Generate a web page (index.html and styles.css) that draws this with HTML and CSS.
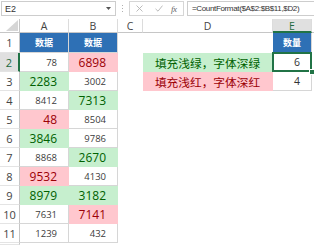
FILE: index.html
```html
<!DOCTYPE html>
<html lang="zh">
<head>
<meta charset="utf-8">
<title>CountFormat</title>
<link rel="stylesheet" href="styles.css">
</head>
<body>
<div class="app">
  <div class="fbar">
    <div class="namebox">
      <span>E2</span>
      <svg class="dd" width="5" height="3" viewBox="0 0 5 3"><polygon points="0,0 5,0 2.5,3" fill="#555"/></svg>
    </div>
    <div class="sep">
      <svg width="2" height="8" viewBox="0 0 2 8"><rect x="0" y="0" width="1" height="1" fill="#b0b0b0"/><rect x="0" y="3" width="1" height="1" fill="#b0b0b0"/><rect x="0" y="6" width="1" height="1" fill="#b0b0b0"/></svg>
    </div>
    <div class="btns">
      <svg class="ic-x" width="7" height="7" viewBox="0 0 7 7"><path d="M0.5 0.5 L6.5 6.5 M6.5 0.5 L0.5 6.5" stroke="#b4b4b4" stroke-width="0.9" fill="none"/></svg>
      <svg class="ic-ok" width="8" height="7" viewBox="0 0 8 7"><path d="M0.5 3.8 L3 6.2 L7.5 0.6" stroke="#b4b4b4" stroke-width="0.9" fill="none"/></svg>
      <span class="fx">fx</span>
    </div>
    <div class="formula">=CountFormat($A$2:$B$11,$D2)</div>
  </div>

  <div class="sheet">
    <!-- column headers -->
    <div class="corner"><svg width="12" height="11" viewBox="0 0 12 11"><polygon points="0,11 12,11 12,0" fill="#d6d6d6"/></svg></div>
    <div class="ch">A</div>
    <div class="ch">B</div>
    <div class="ch">C</div>
    <div class="ch">D</div>
    <div class="ch sel">E</div>
    <div class="ch last"></div>

    <!-- row 1 -->
    <div class="rh">1</div>
    <div class="hd">数据</div>
    <div class="hd">数据</div>
    <div class="e"></div>
    <div class="e"></div>
    <div class="hd">数量</div>
    <div class="e"></div>

    <!-- row 2 -->
    <div class="rh sel">2</div>
    <div class="b n">78</div>
    <div class="b big red">6898</div>
    <div class="e"></div>
    <div class="b note green">填充浅绿，字体深绿</div>
    <div class="b n v active">6</div>
    <div class="e"></div>

    <!-- row 3 -->
    <div class="rh">3</div>
    <div class="b big green">2283</div>
    <div class="b n">3002</div>
    <div class="e"></div>
    <div class="b note red">填充浅红，字体深红</div>
    <div class="b n v">4</div>
    <div class="e"></div>

    <!-- row 4 -->
    <div class="rh">4</div>
    <div class="b n">8412</div>
    <div class="b big green">7313</div>
    <div class="e"></div><div class="e"></div><div class="e"></div><div class="e"></div>

    <!-- row 5 -->
    <div class="rh">5</div>
    <div class="b big red">48</div>
    <div class="b n">8504</div>
    <div class="e"></div><div class="e"></div><div class="e"></div><div class="e"></div>

    <!-- row 6 -->
    <div class="rh">6</div>
    <div class="b big green">3846</div>
    <div class="b n">9786</div>
    <div class="e"></div><div class="e"></div><div class="e"></div><div class="e"></div>

    <!-- row 7 -->
    <div class="rh">7</div>
    <div class="b n">8868</div>
    <div class="b big green">2670</div>
    <div class="e"></div><div class="e"></div><div class="e"></div><div class="e"></div>

    <!-- row 8 -->
    <div class="rh">8</div>
    <div class="b big red">9532</div>
    <div class="b n">4130</div>
    <div class="e"></div><div class="e"></div><div class="e"></div><div class="e"></div>

    <!-- row 9 -->
    <div class="rh">9</div>
    <div class="b big green">8979</div>
    <div class="b big green">3182</div>
    <div class="e"></div><div class="e"></div><div class="e"></div><div class="e"></div>

    <!-- row 10 -->
    <div class="rh">10</div>
    <div class="b n">7631</div>
    <div class="b big red">7141</div>
    <div class="e"></div><div class="e"></div><div class="e"></div><div class="e"></div>

    <!-- row 11 -->
    <div class="rh">11</div>
    <div class="b n">1239</div>
    <div class="b n">432</div>
    <div class="e"></div><div class="e"></div><div class="e"></div><div class="e"></div>

    <!-- row 12 (cut off) -->
    <div class="rh"></div>
    <div class="e"></div><div class="e"></div><div class="e"></div><div class="e"></div><div class="e"></div><div class="e"></div>
  </div>
</div>
</body>
</html>
```

FILE: styles.css
```css
html, body {
  margin: 0;
  padding: 0;
  background: #ffffff;
}
body {
  width: 314px;
  height: 245px;
  overflow: hidden;
  font-family: "Open Sans", "Liberation Sans", "Noto Sans CJK SC", sans-serif;
  color: #333;
}
.app {
  display: flex;
  flex-direction: column;
  width: 314px;
  height: 245px;
}

/* ---------- formula bar ---------- */
.fbar {
  display: flex;
  align-items: flex-start;
  height: 19px;
  padding-top: 1px;
  box-sizing: border-box;
}
.namebox {
  box-sizing: border-box;
  margin-left: 1px;
  width: 115px;
  height: 15px;
  border: 1px solid #cdcdcd;
  display: flex;
  align-items: center;
  justify-content: space-between;
  padding: 0 4px 0 3px;
  font-family: "Liberation Sans", sans-serif;
  font-size: 9px;
  color: #333;
}
.dd { display: block; }
.sep {
  width: 13px;
  height: 15px;
  display: flex;
  align-items: center;
  justify-content: center;
}
.sep svg { display: block; }
.btns {
  box-sizing: border-box;
  width: 55px;
  height: 15px;
  border: 1px solid #d6d6d6;
  display: flex;
  align-items: center;
  padding-left: 6px;
}
.ic-x { display: block; }
.ic-ok { display: block; margin-left: 12px; }
.fx {
  margin-left: 8px;
  font-family: "Liberation Serif", serif;
  font-style: italic;
  font-size: 9px;
  color: #666;
  letter-spacing: -0.5px;
}
.formula {
  box-sizing: border-box;
  margin-left: 3px;
  flex: 1;
  height: 15px;
  border: 1px solid #cdcdcd;
  border-right: none;
  padding-left: 4px;
  display: flex;
  align-items: center;
  font-family: "Liberation Sans", sans-serif;
  font-size: 8px;
  letter-spacing: -0.35px;
  color: #333;
  white-space: nowrap;
}

/* ---------- sheet grid ---------- */
.sheet {
  display: grid;
  grid-template-columns: 20px 49px 49px 25px 130px 39px 1fr;
  grid-template-rows: 14px 20px repeat(10, 19px) 1fr;
  flex: 1;
  min-height: 0;
}
.sheet > div {
  box-sizing: border-box;
  min-width: 0;
  display: flex;
  align-items: center;
  white-space: nowrap;
}

/* column headers */
.corner {
  border-right: 1px solid #c6c6c6;
  border-bottom: 1px solid #c6c6c6;
  justify-content: flex-end;
  align-items: flex-end !important;
  padding: 0 1px 1px 0;
}
.corner svg { display: block; }
.ch {
  justify-content: center;
  border-right: 1px solid #dcdcdc;
  border-bottom: 1px solid #c6c6c6;
  font-size: 10.5px;
  color: #444;
  padding-top: 1px;
}
.ch.sel {
  background: #e0e0e0;
  border-bottom: 2px solid #217346;
  color: #1e6a3f;
}
.ch.last { border-right: none; }

/* row headers */
.rh {
  justify-content: center;
  border-right: 1px solid #c6c6c6;
  border-bottom: 1px solid #e4e4e4;
  font-size: 11px;
  color: #444;
}
.rh.sel {
  background: #e0e0e0;
  border-right: 2px solid #217346;
  color: #1e6a3f;
}

/* cells */
.e { }
.b {
  border-right: 1px solid #d6d6d6;
  border-bottom: 1px solid #d6d6d6;
}
.hd {
  justify-content: center;
  background: #2e70b5;
  border-right: 1px solid #d6d6d6;
  border-bottom: 1px solid #d6d6d6;
  color: #ffffff;
  font-family: "Noto Sans CJK SC", sans-serif;
  font-weight: 700;
  font-size: 9px;
}
.n {
  justify-content: flex-end;
  padding-right: 11px;
  font-size: 9.5px;
  color: #3b3b3b;
}
.v {
  font-size: 10.5px;
  color: #333;
}
.big {
  justify-content: flex-end;
  padding-right: 11px;
  font-size: 12px;
}
.green {
  background: #c6efce;
  color: #006100;
  border-color: transparent;
}
.red {
  background: #ffc7ce;
  color: #9c0006;
  border-color: transparent;
}
.note {
  justify-content: center;
  font-family: "Noto Sans CJK SC", sans-serif;
  font-size: 11.7px;
}

/* active cell */
.active {
  position: relative;
}
.active::before {
  content: "";
  position: absolute;
  left: -1px;
  top: -1px;
  right: -1px;
  bottom: -1px;
  border: 2px solid #217346;
}
.active::after {
  content: "";
  position: absolute;
  right: -4px;
  bottom: -4px;
  width: 4px;
  height: 4px;
  background: #217346;
  border: 1px solid #ffffff;
}
```
